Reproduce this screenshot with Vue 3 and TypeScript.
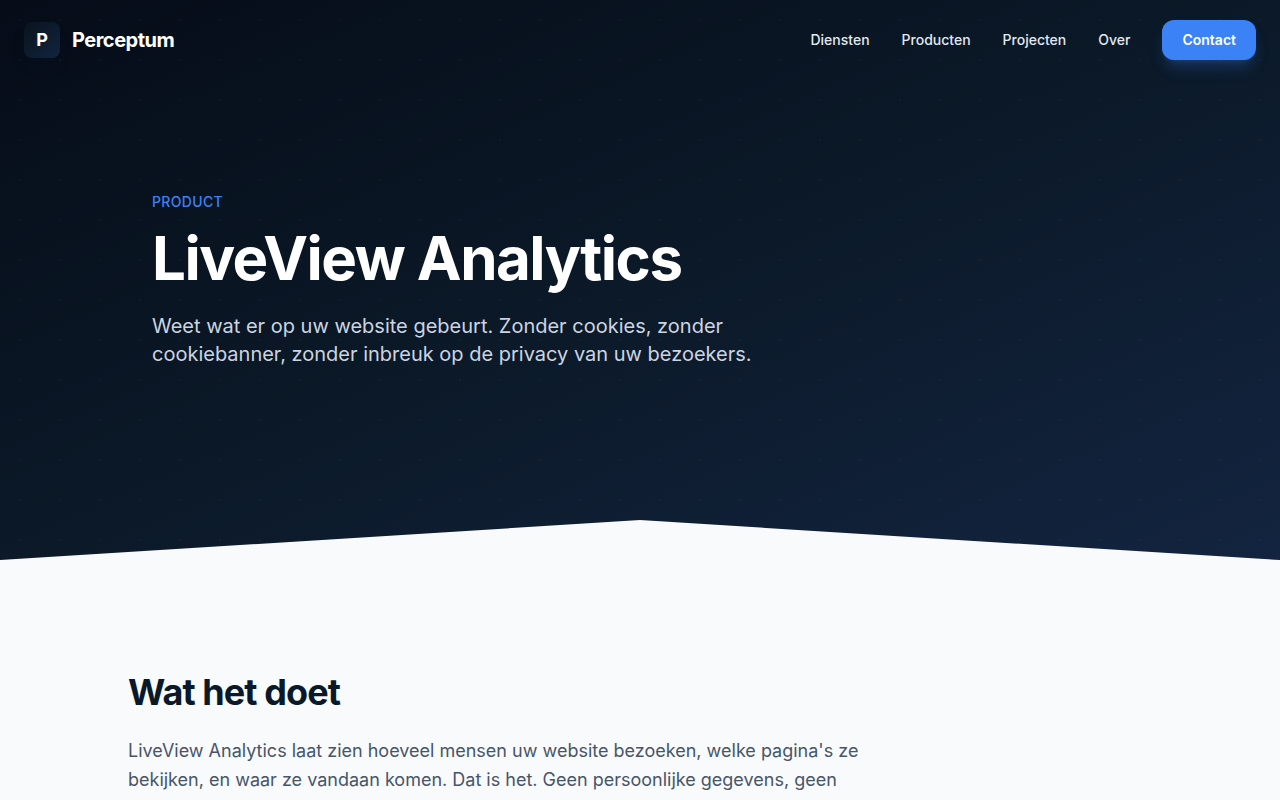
<script setup lang="ts">
interface NavLink {
  label: string
  href: string
}

const links: NavLink[] = [
  { label: 'Diensten', href: '#diensten' },
  { label: 'Producten', href: '#producten' },
  { label: 'Projecten', href: '#projecten' },
  { label: 'Over', href: '#over' },
]
</script>

<template>
  <div class="page">
    <div class="hero">
      <header class="bar">
        <a class="brand" href="#home">
          <span class="mark">P</span>
          <span class="name">Perceptum</span>
        </a>
        <nav class="nav">
          <a v-for="link in links" :key="link.label" class="link" :href="link.href">{{ link.label }}</a>
          <a class="contact" href="#contact">Contact</a>
        </nav>
      </header>
      <section class="intro">
        <p class="eyebrow">Product</p>
        <h1 class="title">LiveView Analytics</h1>
        <p class="lead">
          Weet wat er op uw website gebeurt. Zonder cookies, zonder cookiebanner, zonder inbreuk op de privacy van uw bezoekers.
        </p>
      </section>
      <div class="peak"></div>
    </div>
    <main class="content">
      <h2 class="heading">Wat het doet</h2>
      <p class="body">
        LiveView Analytics laat zien hoeveel mensen uw website bezoeken, welke pagina's ze bekijken, en waar ze vandaan komen. Dat is het. Geen persoonlijke gegevens, geen
      </p>
    </main>
  </div>
</template>

<style>
body {
  background: #f9fafc;
}
</style>

<style scoped>
.page {
  font-family: Inter, 'Liberation Sans', sans-serif;
  color: #0a1929;
  background: #f9fafc;
}

.hero {
  color: #fff;
  background:
    radial-gradient(circle at 20px 20px, rgba(255, 255, 255, 0.03) 1px, transparent 1px) 0 0 / 40px 40px,
    linear-gradient(to bottom right, #060c18 0%, #0b1928 50%, #132440 100%);
}

.bar {
  display: flex;
  align-items: center;
  justify-content: space-between;
  padding: 20px 24px;
}

.brand {
  display: flex;
  align-items: center;
  gap: 12px;
  color: #fff;
  text-decoration: none;
}

.mark {
  display: flex;
  align-items: center;
  justify-content: center;
  width: 36px;
  height: 36px;
  border-radius: 8px;
  background: linear-gradient(to bottom right, #08131c, #132440);
  box-shadow: 0 10px 15px -3px rgba(10, 25, 41, 0.2), 0 4px 6px -4px rgba(10, 25, 41, 0.2);
  font-size: 18px;
  line-height: 28px;
  font-weight: 700;
}

.name {
  font-size: 20px;
  line-height: 28px;
  font-weight: 700;
  letter-spacing: -0.025em;
}

.nav {
  display: flex;
  align-items: center;
  gap: 32px;
  font-size: 14px;
  line-height: 20px;
}

.link {
  color: #e2e8f0;
  font-weight: 500;
}

.link,
.contact {
  text-decoration: none;
}

.contact {
  padding: 10px 20px;
  border-radius: 12px;
  background: #3b82f6;
  box-shadow: 0 10px 15px -3px rgba(59, 130, 246, 0.25), 0 4px 6px -4px rgba(59, 130, 246, 0.25);
  color: #fff;
  font-weight: 600;
}

.intro {
  box-sizing: border-box;
  max-width: 1024px;
  margin: 0 auto;
  padding: 112px 24px 152px;
}

.eyebrow {
  margin: 0 0 16px;
  color: #3b82f6;
  font-size: 14px;
  line-height: 20px;
  font-weight: 500;
  letter-spacing: 0.025em;
  text-transform: uppercase;
}

.title {
  margin: 0 0 24px;
  font-size: 60px;
  line-height: 60px;
  font-weight: 700;
  letter-spacing: -0.025em;
}

.lead {
  max-width: 672px;
  margin: 0;
  color: #cbd5e1;
  font-size: 20px;
  line-height: 28px;
}

.peak {
  height: 40px;
  background: #f9fafc;
  clip-path: polygon(0 100%, 50% 0, 100% 100%);
}

.content {
  max-width: 1024px;
  margin: 0 auto;
  padding: 112px 24px 96px;
}

.heading {
  margin: 0 0 24px;
  font-size: 36px;
  line-height: 40px;
  font-weight: 700;
  letter-spacing: -0.025em;
}

.body {
  max-width: 768px;
  margin: 0;
  color: #475569;
  font-size: 18px;
  line-height: 29px;
}
</style>
